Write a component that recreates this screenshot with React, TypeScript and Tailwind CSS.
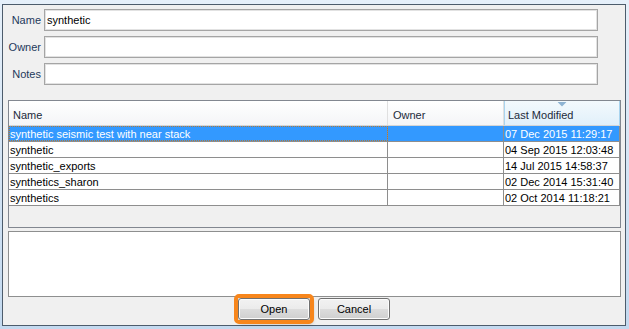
import React from "react";

const rows = [
  { name: "synthetic seismic test with near stack", owner: "", date: "07 Dec 2015 11:29:17" },
  { name: "synthetic", owner: "", date: "04 Sep 2015 12:03:48" },
  { name: "synthetic_exports", owner: "", date: "14 Jul 2015 14:58:37" },
  { name: "synthetics_sharon", owner: "", date: "02 Dec 2014 15:31:40" },
  { name: "synthetics", owner: "", date: "02 Oct 2014 11:18:21" },
];

const Field = ({ label, value }: { label: string; value?: string }) => (
  <div className="flex items-center h-[22px]">
    <span className="w-[38px] text-right text-[#1e395b]">{label}</span>
    <div className="ml-[3px] flex-1 h-full bg-white border border-[#a5a5a5] shadow-[inset_0_0_0_1px_#e2e2e2] flex items-center pl-[2px] text-black">
      {value}
    </div>
  </div>
);

const Button = ({ label }: { label: string }) => (
  <button className="w-[72px] h-[22px] rounded-[3px] border border-[#707070] bg-[linear-gradient(#f2f2f2_0%,#ebebeb_50%,#dddddd_50%,#cfcfcf_100%)] shadow-[inset_0_0_0_1px_#fcfcfc] text-black text-[11px] leading-none">
    {label}
  </button>
);

export default function App() {
  return (
    <div
      className="w-[629px] h-[329px] bg-[linear-gradient(#e6f0fa,#c3d9ef)] pt-[4px] pl-[2px] pr-[3px] pb-[3px] text-[11px]"
      style={{ fontFamily: '"Liberation Sans", Arial, sans-serif' }}
    >
      <div className="w-full h-full border border-[#4d5c6c] bg-[#f0f0f0] flex flex-col">
        <div className="pt-[4px] pr-[27px] flex flex-col gap-[5px]">
          <Field label="Name" value="synthetic" />
          <Field label="Owner" />
          <Field label="Notes" />
        </div>

        <div className="mt-[15px] ml-[5px] mr-[4px] h-[128px] border border-[#828790] bg-[#f0f0f0] flex flex-col">
          <div className="flex h-[25px] border-b border-[#d5d5d5] bg-[linear-gradient(#ffffff,#f4f5f7)] text-[#1c2a3a]">
            <div className="w-[379px] border-r border-[#e0e0e0] flex items-center pt-[4px] pl-[4px]">Name</div>
            <div className="w-[116px] border-r border-[#e0e0e0] flex items-center pt-[4px] pl-[5px]">Owner</div>
            <div className="relative w-[116px] border-x border-[#a9d4ef] bg-[linear-gradient(#f3f9fd,#e1f0fa)] flex items-center pt-[4px] pl-[3px]">
              Last Modified
              <svg className="absolute top-[1px] left-1/2 -translate-x-1/2" width="9" height="5" viewBox="0 0 9 5">
                <path d="M0 0 H9 L4.5 4.5 Z" fill="#8eb3d3" />
              </svg>
            </div>
          </div>
          {rows.map((r, i) => {
            const sel = i === 0;
            return (
              <div
                key={r.name}
                className={`flex h-[16px] border-b border-[#8e8e8e] leading-[16px] ${sel ? "bg-[#3399ff] text-white" : "bg-white text-black"}`}
              >
                <div
                  className={`w-[379px] border-r border-[#8e8e8e] pl-[1px] whitespace-nowrap ${sel ? "outline-1 outline-dotted outline-[#b07a3a] -outline-offset-1" : ""}`}
                >
                  {r.name}
                </div>
                <div className="w-[116px] border-r border-[#8e8e8e]">{r.owner}</div>
                <div className="w-[116px] border-r border-[#8e8e8e] pl-[1px] whitespace-nowrap">{r.date}</div>
              </div>
            );
          })}
        </div>

        <div className="mt-[3px] ml-[5px] mr-[4px] h-[66px] bg-white border border-[#8e8f8f]" />

        <div className="mt-[1px] flex justify-center gap-[8px]">
          <div className="outline-[4px] outline-solid outline-[#f7861c] outline-offset-0 rounded-[1px] shadow-[2px_3px_4px_rgba(0,0,0,0.35)]">
            <Button label="Open" />
          </div>
          <Button label="Cancel" />
        </div>
      </div>
    </div>
  );
}
